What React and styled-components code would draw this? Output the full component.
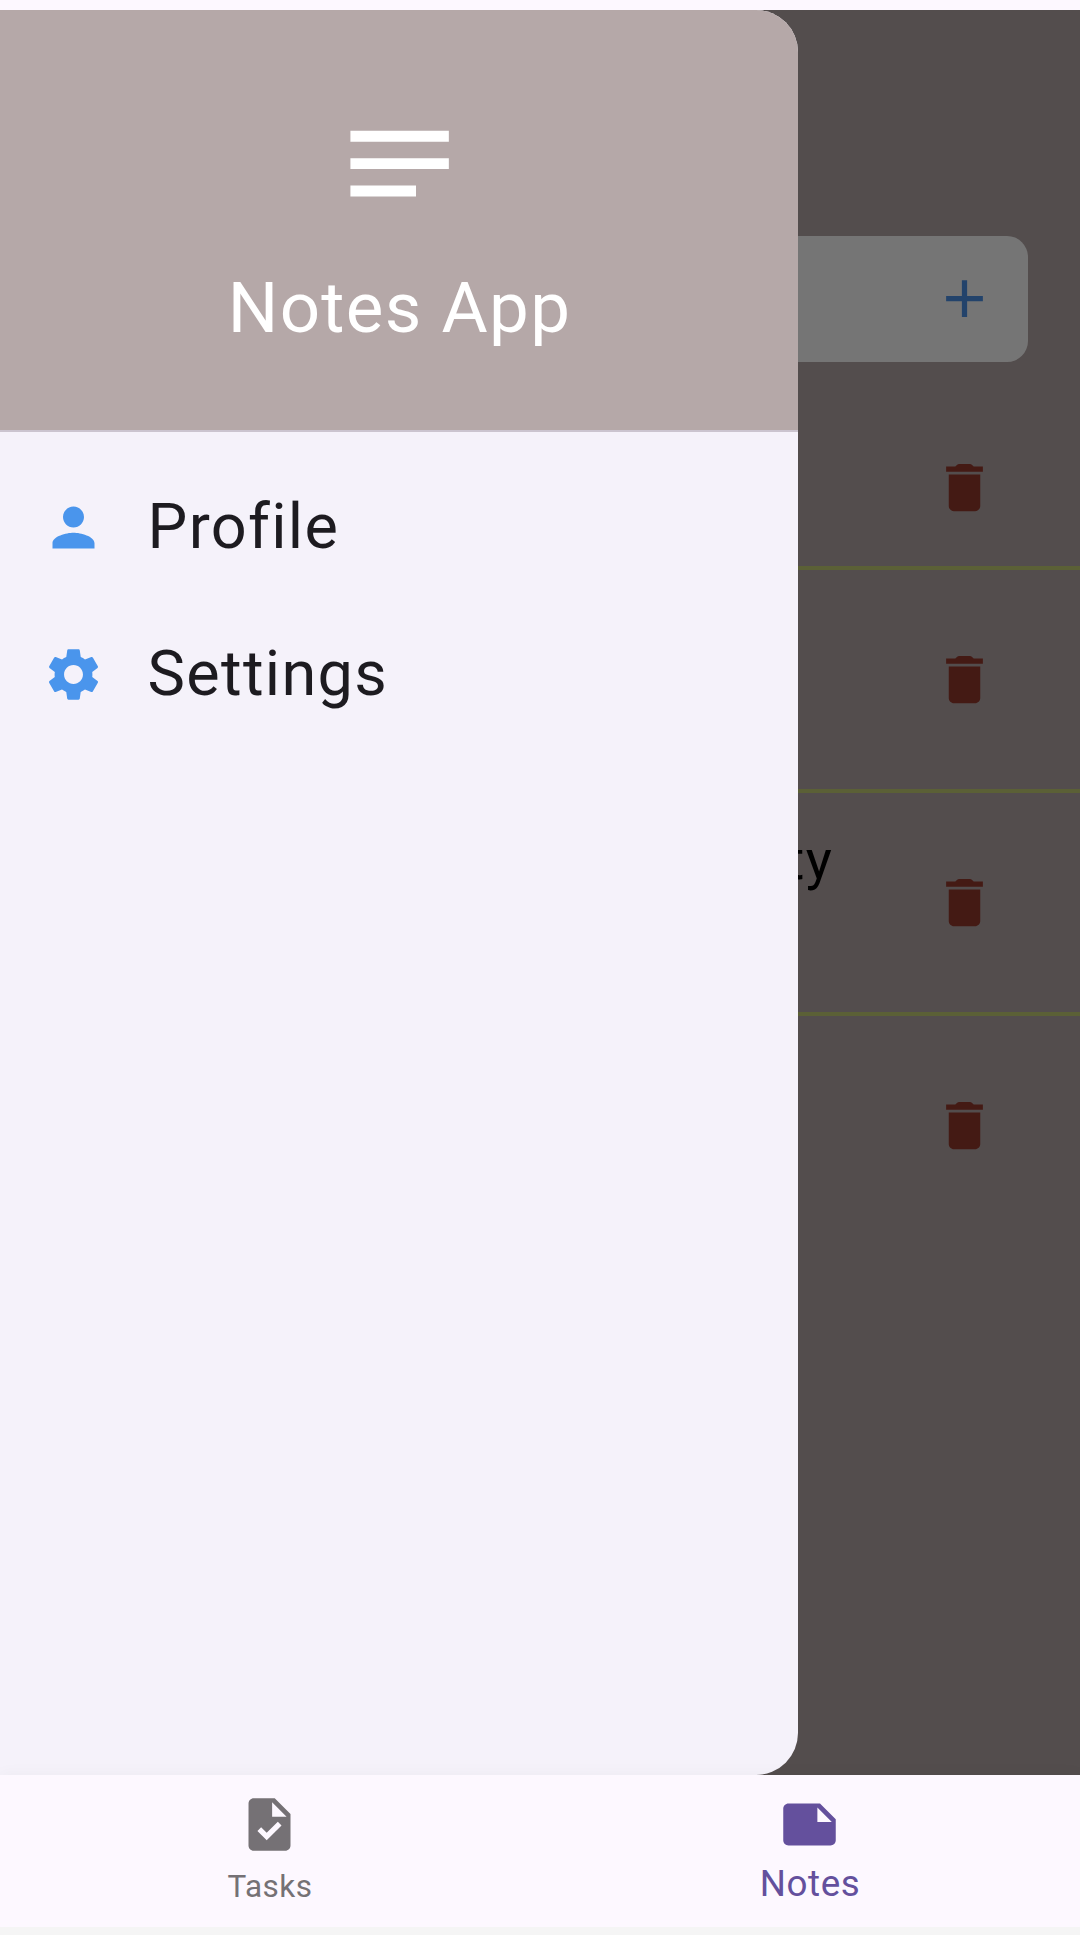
import React from "react";
import styled, { createGlobalStyle } from "styled-components";

const Global = createGlobalStyle`
  * { box-sizing: border-box; }
  body { margin: 0; background: #f5f5f5; font-family: Roboto, "Noto Sans", sans-serif; }
`;

const Screen = styled.div`
  width: 1080px;
  height: 1935px;
  overflow: hidden;
  display: flex;
  flex-direction: column;
  background: #f5f5f5;
`;
const StatusStrip = styled.div`
  height: 10px;
  flex: none;
  background: #fdf8ff;
`;
const Stage = styled.div`
  position: relative;
  height: 1764.6px;
  flex: none;
  overflow: hidden;
  background: #b5a8a8;
`;
const Page = styled.main`
  display: flex;
  flex-direction: column;
  height: 100%;
  padding-top: 225.8px;
`;
const AddField = styled.div`
  height: 126px;
  margin: 0 52.5px;
  padding-right: 31.5px;
  border-radius: 21px;
  background: #fff;
  display: flex;
  align-items: center;
  justify-content: flex-end;
`;
const NoteList = styled.ul`
  list-style: none;
  margin: 19px 0 0;
  padding: 0;
`;
const NoteRow = styled.li`
  height: ${(p) => p.$height}px;
  padding: ${(p) => p.$top}px 84px 0 52.5px;
  display: flex;
  align-items: flex-start;
  justify-content: space-between;
  border-bottom: ${(p) => (p.$last ? "0" : "4.2px")} solid #c6d176;
`;
const NoteText = styled.span`
  width: 780.6px;
  text-align: right;
  font-size: 55.125px;
  line-height: 63px;
  letter-spacing: 1.31px;
  color: #000;
  margin-top: -42.4px;
`;
const Scrim = styled.div`
  position: absolute;
  inset: 0;
  background: rgba(0, 0, 0, 0.541);
`;
const Drawer = styled.aside`
  position: absolute;
  left: 0;
  top: 0;
  bottom: 0;
  width: 798px;
  border-radius: 0 42px 42px 0;
  overflow: hidden;
  background: #f5f2fa;
`;
const DrawerHeader = styled.header`
  height: 422.4px;
  padding: 88.4px 0 0 1px;
  display: flex;
  flex-direction: column;
  align-items: center;
  background: #b5a8a8;
  border-bottom: 2px solid #cbc4cf;
`;
const Title = styled.h1`
  margin: 25px 0 0;
  font-size: 70.875px;
  line-height: 106px;
  font-weight: 400;
  letter-spacing: 1.31px;
  color: #fff;
`;
const Menu = styled.nav`
  padding-top: 21.2px;
  display: flex;
  flex-direction: column;
`;
const MenuItem = styled.a`
  height: 147px;
  padding-left: 42px;
  display: flex;
  align-items: center;
  gap: 42.6px;
  font-size: 63px;
  letter-spacing: 1.31px;
  color: #1d1b20;
`;
const MenuLabel = styled.span`
  padding-bottom: 1px;
`;
const BottomBar = styled.nav`
  position: relative;
  height: 152.4px;
  flex: none;
  display: grid;
  grid-template-columns: 1fr 1fr;
  background: #fdf8ff;
  clip-path: inset(-20px 0 0 0);
  box-shadow: 0 -2px 14px rgba(0, 0, 0, 0.03);
`;
const Tab = styled.a`
  display: flex;
  flex-direction: column;
  align-items: center;
  padding: 18.4px 1px 0 0;
  color: ${(p) => (p.$active ? "#64509d" : "#757175")};
`;
const TabLabel = styled.span`
  margin-top: ${(p) => (p.$active ? "6px" : "12.2px")};
  padding-left: 1px;
  font-size: ${(p) => (p.$active ? "36.75px" : "31.5px")};
  line-height: ${(p) => (p.$active ? "43px" : "37px")};
  letter-spacing: ${(p) => (p.$active ? "0.6px" : "0.5px")};
`;
const Svg = styled.svg`
  display: block;
  flex: none;
  width: ${(p) => p.$size}px;
  height: ${(p) => p.$size}px;
  fill: ${(p) => p.$color || "currentColor"};
`;

const PATHS = {
  notes: "M3 18h12v-2H3v2zM3 6v2h18V6H3zm0 7h18v-2H3v2z",
  person:
    "M12 12c2.21 0 4-1.79 4-4s-1.79-4-4-4-4 1.79-4 4 1.79 4 4 4zm0 2c-2.67 0-8 1.34-8 4v2h16v-2c0-2.66-5.33-4-8-4z",
  settings:
    "M19.14 12.94c.04-.3.06-.61.06-.94 0-.32-.02-.64-.07-.94l2.03-1.58c.18-.14.23-.41.12-.61l-1.92-3.32c-.12-.22-.37-.29-.59-.22l-2.39.96c-.5-.38-1.03-.7-1.62-.94l-.36-2.54c-.04-.24-.24-.41-.48-.41h-3.84c-.24 0-.43.17-.47.41l-.36 2.54c-.59.24-1.13.57-1.62.94l-2.39-.96c-.22-.08-.47 0-.59.22L2.74 8.87c-.12.21-.08.47.12.61l2.03 1.58c-.05.3-.09.63-.09.94s.02.64.07.94l-2.03 1.58c-.18.14-.23.41-.12.61l1.92 3.32c.12.22.37.29.59.22l2.39-.96c.5.38 1.03.7 1.62.94l.36 2.54c.05.24.24.41.48.41h3.84c.24 0 .44-.17.47-.41l.36-2.54c.59-.24 1.13-.56 1.62-.94l2.39.96c.22.08.47 0 .59-.22l1.92-3.32c.12-.22.07-.47-.12-.61l-2.01-1.58zM12 15.6c-1.98 0-3.6-1.62-3.6-3.6s1.62-3.6 3.6-3.6 3.6 1.62 3.6 3.6-1.62 3.6-3.6 3.6z",
  add: "M19 13h-6v6h-2v-6H5v-2h6V5h2v6h6v2z",
  trash:
    "M6 19c0 1.1.9 2 2 2h8c1.1 0 2-.9 2-2V7H6v12zM19 4h-3.5l-.71-.71c-.18-.18-.44-.29-.7-.29H9.91c-.26 0-.52.11-.7.29L8.5 4H5v2h14V4z",
  task: "M14 2H6c-1.1 0-1.99.9-1.99 2L4 20c0 1.1.89 2 1.99 2H18c1.1 0 2-.9 2-2V8l-6-6zm-3.06 16L7.4 14.46l1.41-1.41 2.12 2.12 4.24-4.24 1.41 1.41L10.94 18zM13 9V3.5L18.5 9H13z",
  note: "M22 10l-6-6H4c-1.1 0-2 .9-2 2v12.01c0 1.1.9 1.99 2 1.99l16-.01c1.1 0 2-.89 2-1.99v-8zm-7-4.5l5.5 5.5H15V5.5z",
};

const Icon = ({ name, size = 63, color }) => (
  <Svg viewBox="0 0 24 24" $size={size} $color={color} aria-hidden="true">
    <path d={PATHS[name]} />
  </Svg>
);

const ROWS = [
  { height: 189.4, top: 75.3 },
  { height: 223.1, top: 78 },
  { height: 223.1, top: 78, text: "ty" },
  { height: 223.1, top: 78, last: true },
];

export default function App() {
  return (
    <Screen>
      <Global />
      <StatusStrip />
      <Stage>
        <Page>
          <AddField>
            <Icon name="add" color="#4e93e9" />
          </AddField>
          <NoteList>
            {ROWS.map((row, i) => (
              <NoteRow key={i} $height={row.height} $top={row.top} $last={row.last}>
                <NoteText>{row.text}</NoteText>
                <Icon name="trash" color="#95392d" />
              </NoteRow>
            ))}
          </NoteList>
        </Page>
        <Scrim />
        <Drawer>
          <DrawerHeader>
            <Icon name="notes" size={131.25} color="#fff" />
            <Title>Notes App</Title>
          </DrawerHeader>
          <Menu>
            <MenuItem>
              <Icon name="person" color="#4a95ec" />
              <MenuLabel>Profile</MenuLabel>
            </MenuItem>
            <MenuItem>
              <Icon name="settings" color="#4a95ec" />
              <MenuLabel>Settings</MenuLabel>
            </MenuItem>
          </Menu>
        </Drawer>
      </Stage>
      <BottomBar>
        <Tab>
          <Icon name="task" />
          <TabLabel>Tasks</TabLabel>
        </Tab>
        <Tab $active>
          <Icon name="note" />
          <TabLabel $active>Notes</TabLabel>
        </Tab>
      </BottomBar>
    </Screen>
  );
}
